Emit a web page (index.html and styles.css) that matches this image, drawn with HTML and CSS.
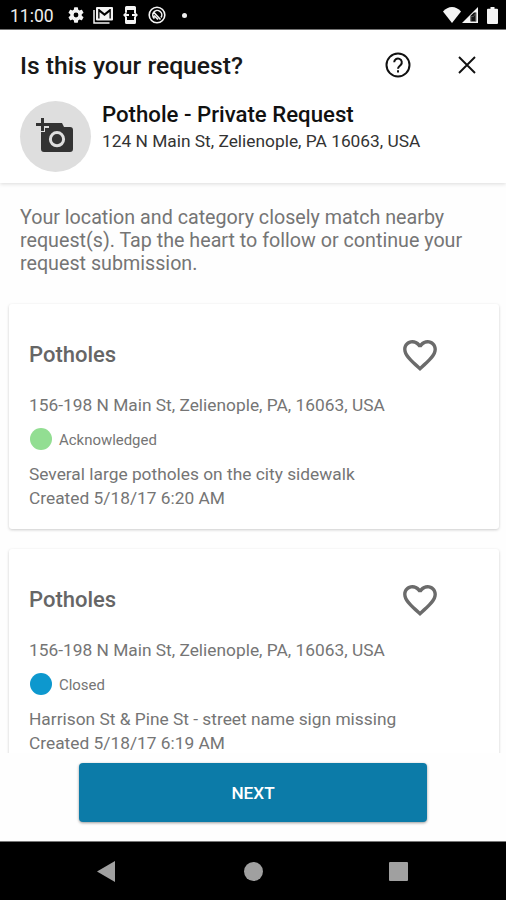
FILE: index.html
```html
<!DOCTYPE html>
<html lang="en">
<head>
<meta charset="utf-8">
<title>Is this your request?</title>
<link rel="stylesheet" href="styles.css">
</head>
<body>
<div class="screen">
  <div class="status-bar">
    <span class="clock">11:00</span>
    <svg class="s-gear" viewBox="2 2 20 20"><path d="M19.14 12.94c.04-.3.06-.61.06-.94s-.02-.64-.07-.94l2.03-1.58a.49.49 0 0 0 .12-.61l-1.92-3.32a.49.49 0 0 0-.59-.22l-2.39.96a7 7 0 0 0-1.62-.94l-.36-2.54a.48.48 0 0 0-.48-.41h-3.84a.47.47 0 0 0-.47.41l-.36 2.54c-.59.24-1.13.57-1.62.94l-2.39-.96a.48.48 0 0 0-.59.22L2.74 8.87a.48.48 0 0 0 .12.61l2.03 1.58a7.7 7.7 0 0 0 0 1.88l-2.03 1.58a.49.49 0 0 0-.12.61l1.920 3.32c.12.22.37.29.59.22l2.39-.96c.5.38 1.03.7 1.62.94l.36 2.54c.05.24.24.41.48.41h3.84c.24 0 .44-.17.47-.41l.36-2.54a7 7 0 0 0 1.62-.94l2.39.96c.22.08.47 0 .59-.22l1.92-3.32a.48.48 0 0 0-.12-.61zM12 15a3 3 0 1 1 0-6 3 3 0 0 1 0 6z"/></svg>
    <svg class="s-mail" viewBox="0 0 20 17"><path d="M1 3v13h15.500" class="line"/><path d="M4 0h15q1 0 1 1v11.500q0 1-1 1H4q-1 0-1-1V1q0-1 1-1zm1.200 2v9.500h1.300V5l5 4 5-4v6.500h1.300V2h-1l-5.300 4.200L6.200 2z" fill-rule="evenodd"/></svg>
    <svg class="s-phone" viewBox="0 0 15 18"><path d="M3.500 0h8q1.500 0 1.500 1.500V7h-2V4H4v2.500H2v-5Q2 0 3.500 0zM2 11h2v3h7v-3h2v5.500q0 1.500-1.500 1.500h-8Q2 18 2 16.500z"/><path d="M3.500 5.500 0 9l3.500 3.500V10H6V8H3.500zM11.500 5.500V8H9v2h2.500v2.500L15 9z"/></svg>
    <svg class="s-circle" viewBox="0 0 18 18"><circle cx="9" cy="9" r="7.800"/><path d="M6.500 12.500A4.500 4.500 0 1 1 13 11.500M5.500 6l7 7.500M6 9.500l4 4"/></svg>
    <span class="dot"></span>
    <span class="grow"></span>
    <svg class="s-wifi" viewBox="0 0 18 16"><path d="M9 16 0 4.500Q4 0 9 0t9 4.500z"/></svg>
    <svg class="s-signal" viewBox="0 0 16 16"><path d="M16 0v16H0z"/><path d="M14.300 5.500V14.500H8.500V8.800L12 5.500z" class="cut"/><path d="M9 14V9.500h2.500l2-3V14" class="stem"/></svg>
    <svg class="s-battery" viewBox="0 0 11 17"><path d="M3.500 0h4v1.800H10q1 0 1 1V16q0 1-1 1H1q-1 0-1-1V2.800q0-1 1-1h2.500z"/></svg>
  </div>

  <header class="header">
    <div class="title-row">
      <h1 class="title">Is this your request?</h1>
      <svg class="help" viewBox="0 0 26 26"><circle cx="13" cy="13" r="11.500"/><path d="M9.200 10.300a3.800 3.800 0 1 1 6.500 2.700C14.300 14.300 13 14.900 13 16.800"/><path d="M13 18.300v2.200"/></svg>
      <svg class="close" viewBox="0 0 18 18"><path d="M1 1l16 16M17 1 1 17"/></svg>
    </div>
    <div class="summary">
      <div class="avatar">
        <svg class="camera" viewBox="0 0 38 34"><path d="M14 5h13l2 4h6q3 0 3 3v19q0 3-3 3H9q-3 0-3-3V14h4v-4h4z"/><path d="M6 0h3v5h5v3H9v5H6V8H1V5h5z"/><circle cx="22" cy="21.200" r="6.600"/></svg>
      </div>
      <div class="summary-text">
        <h2 class="summary-title">Pothole - Private Request</h2>
        <p class="summary-address">124 N Main St, Zelienople, PA 16063, USA</p>
      </div>
    </div>
  </header>

  <main class="content">
    <p class="intro"><span>Your location and category closely match nearby</span><br><span>request(s). Tap the heart to follow or continue your</span><br><span>request submission.</span></p>
    <article class="card">
      <div class="card-head">
        <h3 class="card-title">Potholes</h3>
        <svg class="heart" viewBox="2 3 20 18.350"><path d="M16.500 3c-1.740 0-3.410.81-4.500 2.090C10.910 3.810 9.240 3 7.500 3 4.420 3 2 5.420 2 8.500c0 3.780 3.400 6.860 8.550 11.540L12 21.350l1.450-1.320C18.600 15.360 22 12.280 22 8.500 22 5.420 19.580 3 16.500 3zm-4.400 15.550l-.1.100-.1-.1C7.140 14.240 4 11.390 4 8.500 4 6.500 5.500 5 7.500 5c1.540 0 3.040.99 3.570 2.360h1.870C13.460 5.990 14.960 5 16.500 5c2 0 3.500 1.500 3.500 3.500 0 2.890-3.140 5.740-7.900 10.050z"/></svg>
      </div>
      <p class="address">156-198 N Main St, Zelienople, PA, 16063, USA</p>
      <div class="status"><span class="status-dot acknowledged"></span><span class="status-label">Acknowledged</span></div>
      <p class="description">Several large potholes on the city sidewalk</p>
      <p class="created">Created 5/18/17 6:20 AM</p>
    </article>
    <article class="card">
      <div class="card-head">
        <h3 class="card-title">Potholes</h3>
        <svg class="heart" viewBox="2 3 20 18.350"><path d="M16.500 3c-1.740 0-3.410.81-4.500 2.090C10.910 3.810 9.240 3 7.500 3 4.420 3 2 5.420 2 8.500c0 3.780 3.400 6.860 8.550 11.540L12 21.350l1.450-1.320C18.600 15.360 22 12.280 22 8.500 22 5.420 19.580 3 16.500 3zm-4.400 15.550l-.1.100-.1-.1C7.140 14.240 4 11.390 4 8.500 4 6.500 5.500 5 7.500 5c1.540 0 3.040.99 3.570 2.360h1.870C13.460 5.990 14.960 5 16.500 5c2 0 3.500 1.500 3.500 3.500 0 2.890-3.140 5.740-7.900 10.050z"/></svg>
      </div>
      <p class="address">156-198 N Main St, Zelienople, PA, 16063, USA</p>
      <div class="status"><span class="status-dot closed"></span><span class="status-label">Closed</span></div>
      <p class="description">Harrison St &amp; Pine St - street name sign missing</p>
      <p class="created">Created 5/18/17 6:19 AM</p>
    </article>
  </main>

  <footer class="footer"><button class="next">NEXT</button></footer>

  <nav class="nav-bar">
    <svg class="nav-back" viewBox="0 0 18 21"><path d="M18 0v21L0 10.500z"/></svg>
    <span class="nav-home"></span>
    <span class="nav-recent"></span>
  </nav>
</div>
</body>
</html>
```
FILE: styles.css
```css
* { box-sizing: border-box; }
body { margin: 0; font-family: Roboto, "Liberation Sans", sans-serif; background: #fff; }
h1, h2, h3, p { margin: 0; white-space: nowrap; }
svg { display: block; flex: none; }

.screen { width: 506px; height: 900px; display: flex; flex-direction: column; overflow: hidden; background: #fefefe; }

.status-bar { flex: none; height: 30px; border-bottom: 1px solid #777; background: #000; color: #eee; fill: #f4f4f4; display: flex; align-items: center; padding: 1px 8px 0 10px; }
.clock { width: 58px; font-size: 17.500px; line-height: 20px; padding-top: 1px; }
.s-gear { width: 16px; height: 16px; }
.s-mail { width: 20px; height: 17px; margin-left: 9px; }
.s-mail .line { fill: none; stroke: #f4f4f4; stroke-width: 1.500; }
.s-phone { width: 15px; height: 18px; margin-left: 10px; }
.s-circle { width: 18px; height: 18px; margin-left: 10px; fill: none; stroke: #f4f4f4; stroke-width: 1.600; }
.dot { width: 5px; height: 5px; border-radius: 50%; background: #eee; margin-left: 16px; }
.grow { flex: 1; }
.s-wifi { width: 18px; height: 16px; }
.s-signal { width: 16px; height: 16px; margin-left: 1px; }
.s-signal .cut { fill: #111; }
.s-signal .stem { fill: none; stroke: #666; stroke-width: .7; }
.s-battery { width: 11px; height: 17px; margin-left: 9px; }

.header { flex: none; height: 153px; background: #fff; box-shadow: 0 1px 4px rgba(0, 0, 0, .14); }
.title-row { height: 70px; display: flex; align-items: center; padding: 0 30px 0 20px; }
.title { flex: 1; padding-top: 2px; font-size: 24.700px; font-weight: 500; line-height: 30px; color: #181818; }
.help { width: 26px; height: 26px; margin-right: 47px; fill: none; stroke: #111; stroke-width: 2; }
.close { width: 18px; height: 18px; fill: none; stroke: #111; stroke-width: 1.900; }
.summary { display: flex; padding: 1px 20px 0; }
.avatar { width: 71px; height: 71px; border-radius: 50%; background: #dedede; padding: 17px 0 0 15px; }
.camera { width: 38px; height: 34px; fill: #333; }
.camera circle { stroke: #dedede; stroke-width: 3; }
.summary-text { padding-left: 11px; }
.summary-title { font-size: 22.200px; font-weight: 500; line-height: 27px; color: #111; }
.summary-address { font-size: 17.330px; line-height: 26px; color: #333; }

.content { height: 570px; overflow: hidden; padding: 22px 8px 0 9px; }
.intro { padding: 1px 0 0 11px; margin-bottom: 29px; font-size: 19.700px; line-height: 23px; color: #757575; }
.card { width: 490px; height: 225px; margin-bottom: 20px; padding: 30px 20px 0; border-radius: 3px; background: #fff; box-shadow: 0 1px 3px rgba(0, 0, 0, .2); color: #757575; }
.card-head { display: flex; height: 42px; align-items: center; justify-content: space-between; padding-right: 42px; }
.card-title { font-size: 22px; font-weight: 500; line-height: 28px; margin-top: -1px; color: #666; }
.heart { width: 34px; height: 31px; fill: #6b6b6b; }
.address { margin-top: 17px; font-size: 17.330px; line-height: 24px; }
.status { display: flex; align-items: center; height: 22px; margin-top: 11px; padding-left: 1px; }
.status-dot { width: 22px; height: 22px; border-radius: 50%; }
.acknowledged { background: #92de92; }
.closed { background: #0d98ce; }
.status-label { margin-left: 7px; padding-top: 1px; font-size: 14.950px; }
.description { margin-top: 12px; font-size: 17.330px; line-height: 24px; }
.created { font-size: 17.330px; line-height: 24px; }

.footer { flex: none; height: 88px; padding-top: 10px; display: flex; justify-content: center; align-items: flex-start; background: #fefefe; }
.next { width: 348px; height: 59px; border: 0; border-radius: 4px; background: #0c7ba8; color: #fff; font: 500 17.200px Roboto, "Liberation Sans", sans-serif; box-shadow: 0 1px 3px rgba(0, 0, 0, .4); }

.nav-bar { flex: none; height: 59px; border-top: 1px solid #777; background: #000; display: flex; align-items: center; padding-left: 97px; }
.nav-back { width: 18px; height: 21px; fill: #a0a0a0; }
.nav-home { width: 19px; height: 19px; margin-left: 129px; border-radius: 50%; background: #a0a0a0; }
.nav-recent { width: 19px; height: 19px; margin-left: 126px; border-radius: 1px; background: #a0a0a0; }
```
